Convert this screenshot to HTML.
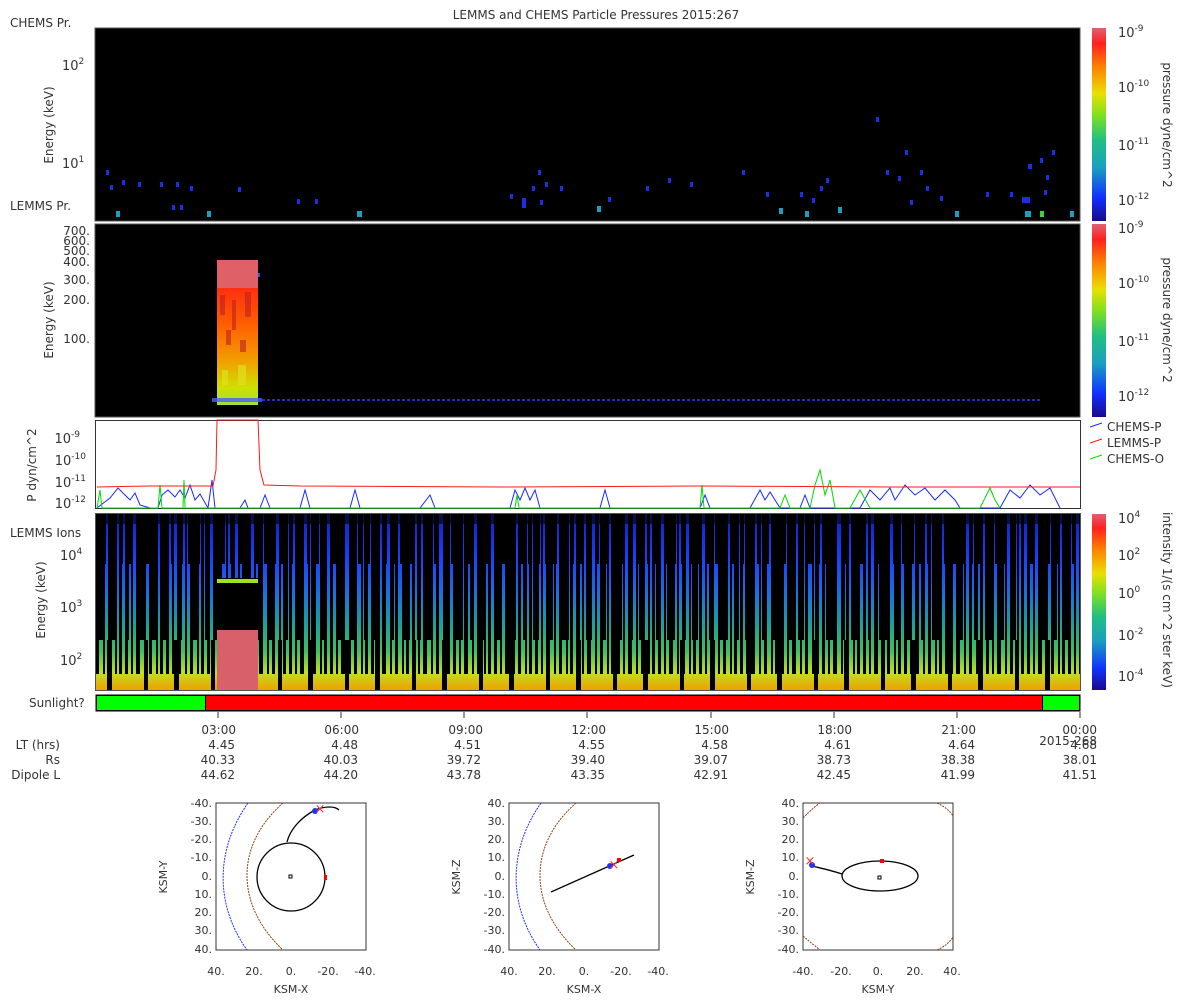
<!DOCTYPE html>
<html><head><meta charset="utf-8"><style>
body{margin:0;background:#fff;}
svg{display:block;font-family:"DejaVu Sans","Liberation Sans",sans-serif;}
text{fill:#333;}
</style></head><body>
<svg width="1200" height="1000" viewBox="0 0 1200 1000" xmlns="http://www.w3.org/2000/svg">
<defs>
<linearGradient id="cb" x1="0" y1="1" x2="0" y2="0">
<stop offset="0" stop-color="#1a0a8c"/><stop offset="0.12" stop-color="#1030ff"/>
<stop offset="0.28" stop-color="#1aa0c0"/><stop offset="0.42" stop-color="#20c080"/>
<stop offset="0.55" stop-color="#80e020"/><stop offset="0.66" stop-color="#e8e000"/>
<stop offset="0.8" stop-color="#ff8000"/><stop offset="0.92" stop-color="#ff2020"/>
<stop offset="1" stop-color="#e06070"/></linearGradient>
<linearGradient id="ions" x1="0" y1="0" x2="0" y2="1">
<stop offset="0" stop-color="#1020c0"/><stop offset="0.25" stop-color="#1a40ff"/>
<stop offset="0.45" stop-color="#1a70e0"/><stop offset="0.62" stop-color="#18a0a0"/>
<stop offset="0.78" stop-color="#40c060"/><stop offset="0.9" stop-color="#c0e020"/>
<stop offset="1" stop-color="#f0a000"/></linearGradient>
<linearGradient id="burst" x1="0" y1="0" x2="0" y2="1">
<stop offset="0" stop-color="#e05050"/><stop offset="0.2" stop-color="#ff3010"/>
<stop offset="0.45" stop-color="#ff6000"/><stop offset="0.7" stop-color="#f0a000"/>
<stop offset="0.88" stop-color="#d0e000"/><stop offset="1" stop-color="#a0e040"/></linearGradient>
<pattern id="st1" width="41" height="200" patternUnits="userSpaceOnUse">
<rect x="2" y="0" width="3" height="200" fill="#000"/><rect x="8" y="0" width="2" height="200" fill="#000"/>
<rect x="13" y="0" width="4" height="200" fill="#000"/><rect x="21" y="0" width="2" height="200" fill="#000"/>
<rect x="26" y="0" width="3" height="200" fill="#000"/><rect x="33" y="0" width="2" height="200" fill="#000"/>
<rect x="37" y="0" width="3" height="200" fill="#000"/></pattern>
<pattern id="st3" width="17" height="200" patternUnits="userSpaceOnUse">
<rect x="1" y="0" width="3" height="200" fill="#000"/><rect x="9" y="0" width="4" height="200" fill="#000"/></pattern>
<pattern id="st4" width="53" height="200" patternUnits="userSpaceOnUse">
<rect x="3" y="0" width="6" height="200" fill="#000"/><rect x="20" y="0" width="3" height="200" fill="#000"/>
<rect x="31" y="0" width="8" height="200" fill="#000"/><rect x="46" y="0" width="4" height="200" fill="#000"/></pattern>
<pattern id="st6" width="67" height="200" patternUnits="userSpaceOnUse">
<rect x="10" y="0" width="4" height="200" fill="#000"/><rect x="40" y="0" width="5" height="200" fill="#000"/></pattern>
</defs>

<text x="596" y="19" font-size="12" text-anchor="middle">LEMMS and CHEMS Particle Pressures  2015:267</text>

<!-- Panel 1 -->
<rect x="95" y="28" width="985" height="193" fill="#000" stroke="#555"/>
<text x="10" y="27" font-size="12">CHEMS Pr.</text>
<text x="10" y="210" font-size="12">LEMMS Pr.</text>
<text x="53" y="125" font-size="12" transform="rotate(-90 53 125)" text-anchor="middle">Energy (keV)</text>
<text x="62" y="70" font-size="13">10<tspan font-size="9" dy="-6">2</tspan></text>
<text x="62" y="168" font-size="13">10<tspan font-size="9" dy="-6">1</tspan></text>
<g fill="#1a30e0">
<rect x="106" y="170" width="3" height="5"/><rect x="110" y="185" width="3" height="5"/><rect x="122" y="180" width="3" height="5"/><rect x="138" y="182" width="3" height="5"/><rect x="160" y="182" width="3" height="5"/><rect x="176" y="182" width="3" height="5"/><rect x="190" y="186" width="3" height="5"/><rect x="172" y="205" width="3" height="5"/><rect x="180" y="205" width="3" height="5"/><rect x="238" y="187" width="3" height="5"/><rect x="297" y="199" width="3" height="5"/><rect x="315" y="199" width="3" height="5"/><rect x="510" y="194" width="3" height="5"/><rect x="522" y="198" width="4" height="10"/><rect x="532" y="186" width="3" height="5"/><rect x="538" y="170" width="3" height="5"/><rect x="545" y="182" width="3" height="5"/><rect x="540" y="200" width="3" height="5"/><rect x="560" y="186" width="3" height="5"/><rect x="608" y="197" width="3" height="5"/><rect x="646" y="186" width="3" height="5"/><rect x="668" y="178" width="3" height="5"/><rect x="690" y="182" width="3" height="5"/><rect x="742" y="170" width="3" height="5"/><rect x="766" y="192" width="3" height="5"/><rect x="800" y="192" width="3" height="5"/><rect x="812" y="198" width="3" height="5"/><rect x="820" y="186" width="3" height="5"/><rect x="826" y="178" width="3" height="5"/><rect x="876" y="117" width="3" height="5"/><rect x="886" y="170" width="3" height="5"/><rect x="898" y="176" width="3" height="5"/><rect x="905" y="150" width="3" height="5"/><rect x="910" y="200" width="3" height="5"/><rect x="920" y="170" width="3" height="5"/><rect x="926" y="186" width="3" height="5"/><rect x="940" y="196" width="3" height="5"/><rect x="986" y="192" width="3" height="5"/><rect x="1010" y="192" width="3" height="5"/><rect x="1022" y="197" width="8" height="6"/><rect x="1028" y="164" width="4" height="5"/><rect x="1040" y="158" width="3" height="5"/><rect x="1046" y="175" width="3" height="5"/><rect x="1052" y="150" width="3" height="5"/><rect x="1044" y="190" width="3" height="5"/>
</g>
<g fill="#18a0c0"><rect x="116" y="211" width="4" height="6"/><rect x="207" y="211" width="4" height="6"/><rect x="357" y="211" width="5" height="6"/><rect x="597" y="206" width="4" height="6"/><rect x="779" y="208" width="4" height="6"/><rect x="805" y="211" width="4" height="6"/><rect x="838" y="207" width="4" height="6"/><rect x="955" y="211" width="4" height="6"/><rect x="1025" y="211" width="6" height="6"/><rect x="1070" y="211" width="4" height="6"/></g>
<g fill="#40d040"><rect x="1040" y="211" width="4" height="6"/></g>
<rect x="1092" y="28" width="14" height="193" fill="url(#cb)"/>
<text x="1118" y="37" font-size="13">10<tspan font-size="9" dy="-6">-9</tspan></text>
<text x="1118" y="92" font-size="13">10<tspan font-size="9" dy="-6">-10</tspan></text>
<text x="1118" y="150" font-size="13">10<tspan font-size="9" dy="-6">-11</tspan></text>
<text x="1118" y="205" font-size="13">10<tspan font-size="9" dy="-6">-12</tspan></text>
<text x="1163" y="125" font-size="12" transform="rotate(90 1163 125)" text-anchor="middle">pressure dyne/cm^2</text>

<!-- Panel 2 -->
<rect x="95" y="224" width="985" height="193" fill="#000" stroke="#555"/>
<text x="53" y="320" font-size="12" transform="rotate(-90 53 320)" text-anchor="middle">Energy (keV)</text>
<g font-size="12" text-anchor="end">
<text x="90" y="235">700.</text><text x="90" y="245">600.</text><text x="90" y="255">500.</text><text x="90" y="266">400.</text><text x="90" y="284">300.</text><text x="90" y="304">200.</text><text x="90" y="343">100.</text></g>
<rect x="217" y="260" width="41" height="145" fill="url(#burst)"/>
<rect x="217" y="260" width="41" height="28" fill="#e06068"/>
<g fill="#c02020" opacity="0.6"><rect x="220" y="295" width="5" height="20"/><rect x="232" y="300" width="4" height="30"/><rect x="245" y="292" width="6" height="25"/><rect x="226" y="330" width="5" height="15"/><rect x="240" y="340" width="6" height="12"/></g>
<g fill="#e0e020" opacity="0.7"><rect x="222" y="370" width="6" height="15"/><rect x="238" y="365" width="8" height="20"/></g>
<rect x="258" y="273" width="2" height="4" fill="#3050ff"/>
<rect x="212" y="398" width="50" height="4" fill="#4060ff" opacity="0.8"/>
<line x1="262" y1="400" x2="1040" y2="400" stroke="#2030c0" stroke-width="2" stroke-dasharray="3 2"/>
<rect x="1092" y="224" width="14" height="193" fill="url(#cb)"/>
<text x="1118" y="233" font-size="13">10<tspan font-size="9" dy="-6">-9</tspan></text>
<text x="1118" y="288" font-size="13">10<tspan font-size="9" dy="-6">-10</tspan></text>
<text x="1118" y="346" font-size="13">10<tspan font-size="9" dy="-6">-11</tspan></text>
<text x="1118" y="401" font-size="13">10<tspan font-size="9" dy="-6">-12</tspan></text>
<text x="1163" y="320" font-size="12" transform="rotate(90 1163 320)" text-anchor="middle">pressure dyne/cm^2</text>

<!-- Panel 3 -->
<rect x="95.5" y="420.5" width="985" height="88" fill="#fff" stroke="#333"/>
<text x="36" y="465" font-size="12" transform="rotate(-90 36 465)" text-anchor="middle">P dyn/cm^2</text>
<g font-size="13" text-anchor="end"><text x="80" y="443">10<tspan font-size="9" dy="-6">-9</tspan></text><text x="86" y="465">10<tspan font-size="9" dy="-6">-10</tspan></text><text x="86" y="487">10<tspan font-size="9" dy="-6">-11</tspan></text><text x="86" y="508">10<tspan font-size="9" dy="-6">-12</tspan></text></g>
<polyline fill="none" stroke="#1a2aff" stroke-width="1" points="97,508 110,498 118,488 125,495 130,500 135,493 140,505 150,508 158,508 162,495 168,490 175,497 180,490 185,498 190,485 195,500 200,494 208,508 212,480 215,508 240,508 245,500 248,508 260,508 265,495 270,508 300,508 305,490 310,508 350,508 355,490 360,508 420,508 430,495 435,508 510,508 515,490 520,500 525,488 530,500 535,490 540,508 600,508 605,490 610,508 700,508 705,495 710,508 750,508 760,490 765,500 770,492 780,508 800,508 805,495 810,508 860,508 870,490 880,500 890,488 895,500 905,485 915,495 925,488 935,500 945,490 955,500 960,508 1000,508 1010,490 1020,498 1030,485 1040,495 1050,488 1060,508"/>
<polyline fill="none" stroke="#00dd00" stroke-width="1" points="97,508 100,490 102,508 158,508 160,485 162,508 183,508 184,480 185,508 515,508 517,495 519,508 700,508 702,485 704,508 780,508 785,495 790,508 810,508 815,485 820,470 825,495 830,480 835,508 850,508 860,490 870,508 980,508 990,488 995,500 1000,508"/>
<polyline fill="none" stroke="#ff1a1a" stroke-width="1" points="97,487 150,486 213,486 216,470 217,420 258,420 260,470 264,485 300,486 500,487 700,486 900,487 1000,487 1080,487"/>
<g font-size="12"><line x1="1090" y1="427" x2="1102" y2="423" stroke="#1a2aff"/><text x="1107" y="431">CHEMS-P</text>
<line x1="1090" y1="443" x2="1102" y2="439" stroke="#ff1a1a"/><text x="1107" y="447">LEMMS-P</text>
<line x1="1090" y1="459" x2="1102" y2="455" stroke="#00dd00"/><text x="1107" y="463">CHEMS-O</text></g>

<!-- Panel 4 -->
<rect x="96" y="514" width="984" height="176" fill="url(#ions)"/>
<rect x="96" y="514" width="984" height="160" fill="url(#st1)"/>
<rect x="96" y="514" width="984" height="126" fill="url(#st4)"/>
<rect x="96" y="514" width="984" height="50" fill="url(#st3)"/>
<rect x="96" y="640" width="984" height="50" fill="url(#st6)"/>
<rect x="96" y="514" width="984" height="10" fill="#000" opacity="0.6"/>
<rect x="217" y="578" width="41" height="52" fill="#000"/>
<rect x="217" y="579" width="41" height="4" fill="#a0e020"/>
<rect x="217" y="630" width="41" height="60" fill="#d8606a"/>
<rect x="95.5" y="513.5" width="985" height="177" fill="none" stroke="#555"/>
<text x="10" y="537" font-size="12">LEMMS Ions</text>
<text x="45" y="600" font-size="12" transform="rotate(-90 45 600)" text-anchor="middle">Energy (keV)</text>
<g font-size="13"><text x="60" y="560">10<tspan font-size="9" dy="-6">4</tspan></text><text x="60" y="612">10<tspan font-size="9" dy="-6">3</tspan></text><text x="60" y="665">10<tspan font-size="9" dy="-6">2</tspan></text></g>
<rect x="1092" y="514" width="14" height="176" fill="url(#cb)"/>
<g font-size="13"><text x="1118" y="523">10<tspan font-size="9" dy="-6">4</tspan></text><text x="1118" y="560">10<tspan font-size="9" dy="-6">2</tspan></text><text x="1118" y="598">10<tspan font-size="9" dy="-6">0</tspan></text><text x="1118" y="640">10<tspan font-size="9" dy="-6">-2</tspan></text><text x="1118" y="681">10<tspan font-size="9" dy="-6">-4</tspan></text></g>
<text x="1163" y="600" font-size="12" transform="rotate(90 1163 600)" text-anchor="middle">intensity 1/(s cm^2 ster keV)</text>

<!-- Sunlight -->
<rect x="95.5" y="694.5" width="985" height="17" fill="#000"/>
<rect x="97" y="696" width="108" height="14" fill="#00ff00"/>
<rect x="206" y="696" width="836" height="14" fill="#ff0000"/>
<rect x="1043" y="696" width="36" height="14" fill="#00ff00"/>
<text x="29" y="707" font-size="12">Sunlight?</text>
<g stroke="#333"><line x1="218" y1="712" x2="218" y2="718"/><line x1="341" y1="712" x2="341" y2="718"/><line x1="464" y1="712" x2="464" y2="718"/><line x1="587" y1="712" x2="587" y2="718"/><line x1="711" y1="712" x2="711" y2="718"/><line x1="834" y1="712" x2="834" y2="718"/><line x1="957" y1="712" x2="957" y2="718"/><line x1="1080" y1="712" x2="1080" y2="718"/></g>

<g font-size="12" text-anchor="end">
<text x="236" y="734">03:00</text><text x="359" y="734">06:00</text><text x="483" y="734">09:00</text><text x="606" y="734">12:00</text><text x="729" y="734">15:00</text><text x="852" y="734">18:00</text><text x="976" y="734">21:00</text><text x="1097" y="734">00:00</text>
<text x="235" y="749">4.45</text><text x="358" y="749">4.48</text><text x="481" y="749">4.51</text><text x="605" y="749">4.55</text><text x="728" y="749">4.58</text><text x="851" y="749">4.61</text><text x="975" y="749">4.64</text><text x="1097" y="749">4.68</text>
<text x="235" y="764">40.33</text><text x="358" y="764">40.03</text><text x="481" y="764">39.72</text><text x="605" y="764">39.40</text><text x="728" y="764">39.07</text><text x="851" y="764">38.73</text><text x="975" y="764">38.38</text><text x="1097" y="764">38.01</text>
<text x="235" y="779">44.62</text><text x="358" y="779">44.20</text><text x="481" y="779">43.78</text><text x="605" y="779">43.35</text><text x="728" y="779">42.91</text><text x="851" y="779">42.45</text><text x="975" y="779">41.99</text><text x="1097" y="779">41.51</text>
<text x="1097" y="745">2015-268</text>
<text x="60" y="749">LT (hrs)</text><text x="60" y="764">Rs</text><text x="60" y="779">Dipole L</text>
</g>

<!-- Orbit plots -->
<g font-size="11">
<rect x="216" y="803" width="150" height="147" fill="#fff" stroke="#333"/>
<g text-anchor="end"><text x="212" y="807">-40.</text><text x="212" y="825">-30.</text><text x="212" y="843">-20.</text><text x="212" y="861">-10.</text><text x="212" y="880">0.</text><text x="212" y="898">10.</text><text x="212" y="916">20.</text><text x="212" y="934">30.</text><text x="212" y="953">40.</text></g>
<g text-anchor="middle"><text x="216" y="975">40.</text><text x="254" y="975">20.</text><text x="291" y="975">0.</text><text x="328" y="975">-20.</text><text x="365" y="975">-40.</text><text x="291" y="993">KSM-X</text></g>
<text x="167" y="877" transform="rotate(-90 167 877)" text-anchor="middle">KSM-Y</text>
<path d="M248,803 C215,850 215,905 247,950" fill="none" stroke="#2030ff" stroke-dasharray="2 1"/>
<path d="M283,803 C235,845 235,905 283,950" fill="none" stroke="#8a4010" stroke-dasharray="2 1"/>
<circle cx="291" cy="877" r="34" fill="none" stroke="#000" stroke-width="1.3"/>
<path d="M287,842 C290,830 300,818 315,810 C325,806 335,806 339,810" fill="none" stroke="#000" stroke-width="1.3"/>
<rect x="289" y="875" width="3" height="3" fill="none" stroke="#000"/>
<rect x="324" y="875" width="3" height="5" fill="#f00"/>
<circle cx="315" cy="811" r="3" fill="#2030ff"/>
<text x="320" y="813" font-size="13" style="fill:#f33" text-anchor="middle">×</text>
<rect x="509" y="803" width="150" height="147" fill="#fff" stroke="#333"/>
<g text-anchor="end"><text x="505" y="807">40.</text><text x="505" y="825">30.</text><text x="505" y="843">20.</text><text x="505" y="861">10.</text><text x="505" y="880">0.</text><text x="505" y="898">-10.</text><text x="505" y="916">-20.</text><text x="505" y="934">-30.</text><text x="505" y="953">-40.</text></g>
<g text-anchor="middle"><text x="509" y="975">40.</text><text x="547" y="975">20.</text><text x="584" y="975">0.</text><text x="621" y="975">-20.</text><text x="658" y="975">-40.</text><text x="584" y="993">KSM-X</text></g>
<text x="460" y="877" transform="rotate(-90 460 877)" text-anchor="middle">KSM-Z</text>
<path d="M541,803 C508,850 508,905 540,950" fill="none" stroke="#2030ff" stroke-dasharray="2 1"/>
<path d="M576,803 C528,845 528,905 576,950" fill="none" stroke="#8a4010" stroke-dasharray="2 1"/>
<line x1="551" y1="892" x2="634" y2="855" stroke="#000" stroke-width="1.3"/>
<circle cx="610" cy="866" r="3" fill="#2030ff"/>
<rect x="617" y="858" width="4" height="4" fill="#f00"/>
<text x="614" y="869" font-size="13" style="fill:#f33" text-anchor="middle">×</text>
<rect x="803" y="803" width="150" height="147" fill="#fff" stroke="#333"/>
<g text-anchor="end"><text x="799" y="807">40.</text><text x="799" y="825">30.</text><text x="799" y="843">20.</text><text x="799" y="861">10.</text><text x="799" y="880">0.</text><text x="799" y="898">-10.</text><text x="799" y="916">-20.</text><text x="799" y="934">-30.</text><text x="799" y="953">-40.</text></g>
<g text-anchor="middle"><text x="803" y="975">-40.</text><text x="841" y="975">-20.</text><text x="878" y="975">0.</text><text x="915" y="975">20.</text><text x="952" y="975">40.</text><text x="878" y="993">KSM-Y</text></g>
<text x="754" y="877" transform="rotate(-90 754 877)" text-anchor="middle">KSM-Z</text>
<path d="M803,818 Q815,806 820,803 M937,803 Q948,808 953,816 M803,936 Q815,946 820,950 M937,950 Q948,945 953,937" fill="none" stroke="#8a4010" stroke-dasharray="2 1"/>
<ellipse cx="880" cy="876" rx="38" ry="15" fill="none" stroke="#000" stroke-width="1.3"/>
<path d="M842,874 C830,870 820,868 812,866" fill="none" stroke="#000" stroke-width="1.3"/>
<circle cx="812" cy="865" r="3" fill="#2030ff"/>
<rect x="880" y="859" width="4" height="4" fill="#f00"/>
<rect x="878" y="876" width="3" height="3" fill="none" stroke="#000"/>
<text x="810" y="865" font-size="13" style="fill:#f33" text-anchor="middle">×</text>
</g>
</svg>
</body></html>
